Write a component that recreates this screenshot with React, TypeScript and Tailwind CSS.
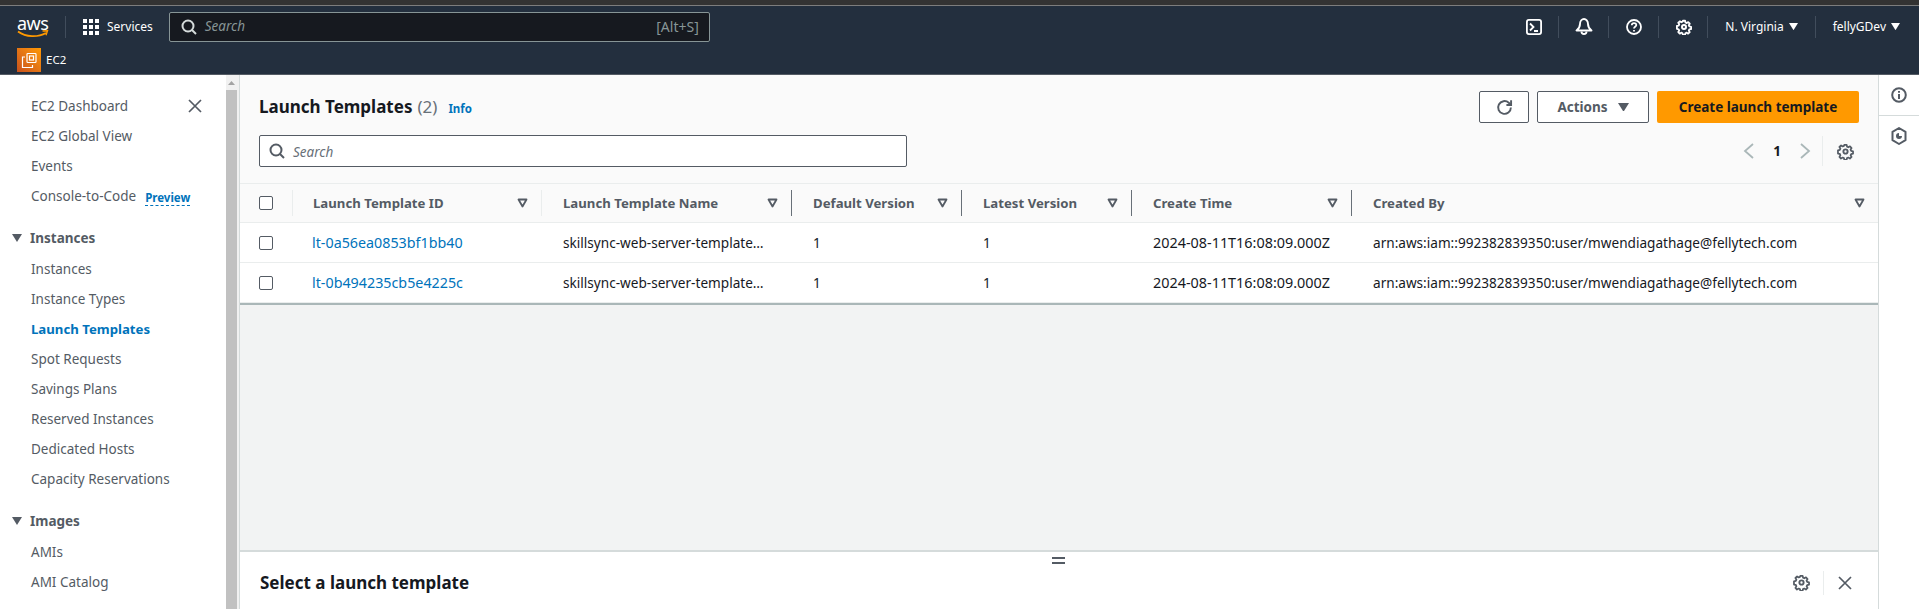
import React from "react";

const font = "font-['Noto_Sans','Open_Sans',sans-serif]";

const Gear = ({ size = 18, color = "currentColor", sw = 1.8 }: { size?: number; color?: string; sw?: number }) => (
  <svg width={size} height={size} viewBox="0 0 16 16" fill="none" stroke={color} strokeWidth={sw}>
    <circle cx="8" cy="8" r="2" />
    <path d="M6.800 1.200h2.400l.4 1.900 1.300.6 1.700-1 1.600 1.700-1 1.600.6 1.400 1.900.4v2.400l-1.900.4-.6 1.300 1 1.700-1.700 1.600-1.600-1-1.400.6-.4 1.900H6.800l-.4-1.900-1.300-.6-1.700 1-1.600-1.700 1-1.600-.6-1.400-1.900-.4V6.800l1.900-.4.6-1.300-1-1.700 1.700-1.600 1.600 1 1.400-.6z" strokeLinejoin="round" transform="translate(8 8) scale(.92) translate(-8 -8)" />
  </svg>
);

const SearchIcon = ({ color }: { color: string }) => (
  <svg width="16" height="16" viewBox="0 0 16 16" fill="none" stroke={color} strokeWidth={2}>
    <circle cx="7" cy="7" r="5.500" />
    <path d="M11 11l4 4" />
  </svg>
);

const Caret = ({ size = 10, color = "#fff" }: { size?: number; color?: string }) => (
  <svg width={size} height={size * 0.8} viewBox="0 0 10 8">
    <path d="M0 0h10L5 8z" fill={color} />
  </svg>
);

const FilterCaret = () => (
  <svg width="11" height="10" viewBox="0 0 11 10" fill="none" stroke="#545b64" strokeWidth={1.800}>
    <path d="M1.500 1.500h8L5.500 8.500z" strokeLinejoin="round" />
  </svg>
);

const Check = () => <div className="w-[14px] h-[14px] rounded-[2px] border border-[#545b64] bg-white" />;

const NavSep = () => <div className="w-px h-[22px] bg-[#414d5c]" />;

const Nav = () => (
  <div className="h-[69px] bg-[#232f3e] border-b border-[#545b64] text-white flex flex-col">
    <div className="h-[41px] flex items-center">
      <div className="w-[65px] pl-[17px] h-[30px] flex flex-col items-start justify-center mt-[1px]">
        <span className="text-[18px] leading-[14px] tracking-[-0.5px]">aws</span>
        <svg width="32" height="9" viewBox="0 0 32 9" fill="none">
          <path d="M1 1.500c8 6 20 6 28 1.500" stroke="#ff9900" strokeWidth="1.800" />
          <path d="M25.500 1l5-.3-1.500 4.500" stroke="#ff9900" strokeWidth="1.400" />
        </svg>
      </div>
      <NavSep />
      <div className="ml-[17px] grid grid-cols-3 gap-[2px] w-[16px]">
        {Array.from({ length: 9 }).map((_, i) => (
          <div key={i} className="w-[4px] h-[4px] bg-white" />
        ))}
      </div>
      <span className="ml-[8px] text-[12px]">Services</span>
      <div className="ml-[16px] w-[541px] h-[30px] rounded-[2px] border border-[#879596] bg-[#16191f] flex items-center pl-[11px] pr-[10px]">
        <SearchIcon color="#d5dbdb" />
        <span className="ml-[8px] italic text-[13.500px] text-[#879596]">Search</span>
        <span className="ml-auto text-[14px] text-[#879596]">[Alt+S]</span>
      </div>
      <div className="ml-auto flex items-center pr-[19px]">
        <svg width="16" height="16" viewBox="0 0 16 16" fill="none" stroke="#fff" strokeWidth="1.800" className="mr-[16px]">
          <rect x=".9" y=".9" width="14.200" height="14.200" rx="2" />
          <path d="M4 4.500L7.500 8 4 11.500M8 12h4" />
        </svg>
        <NavSep />
        <svg width="18" height="17" viewBox="0 0 18 17" fill="none" stroke="#fff" strokeWidth="1.900" className="ml-[16px] mr-[15px]">
          <path d="M1.500 12.500h15c-2-1.500-3.500-3.500-3.500-6.500C13 3 11 1 9 1S5 3 5 6c0 3-1.500 5-3.500 6.500z" strokeLinejoin="round" />
          <path d="M6.500 13.500a2.500 2.500 0 005 0" />
        </svg>
        <NavSep />
        <svg width="16" height="16" viewBox="0 0 16 16" fill="none" stroke="#fff" strokeWidth="1.800" className="ml-[17px] mr-[16px]">
          <circle cx="8" cy="8" r="7" />
          <path d="M5.800 6.200C5.800 3.500 10.300 3.500 10.300 6c0 1.800-2.300 1.800-2.300 3.500" />
          <path d="M8 11v1.500" />
        </svg>
        <NavSep />
        <span className="ml-[17px] mr-[15px] text-white flex">
          <Gear size={16} sw={2} />
        </span>
        <NavSep />
        <span className="ml-[17px] text-[12px]">N. Virginia</span>
        <span className="ml-[5px] mr-[17px]"><Caret size={9} /></span>
        <NavSep />
        <span className="ml-[17px] text-[12px]">fellyGDev</span>
        <span className="ml-[5px]"><Caret size={9} /></span>
      </div>
    </div>
    <div className="flex items-center pl-[17px] mt-[1px]">
      <div className="w-[24px] h-[24px] bg-gradient-to-tr from-[#c8511b] to-[#ff9900] flex items-center justify-center">
        <svg width="17" height="17" viewBox="0 0 17 17" fill="none" stroke="#fff" strokeWidth="1.200">
          <rect x="6" y="1.500" width="9" height="9" rx=".8" />
          <rect x="8.500" y="4" width="4" height="4" />
          <path d="M4 5H1.500v10.500h10V13" />
        </svg>
      </div>
      <span className="ml-[5px] text-[11.500px]">EC2</span>
    </div>
  </div>
);

const SideItem = ({ t, active }: { t: string; active?: boolean }) => (
  <div className={`h-[30px] pl-[31px] pt-[1px] flex items-center ${active ? "text-[13.200px] text-[#0073bb] font-bold" : "text-[13.500px] text-[#545b64]"}`}>{t}</div>
);

const SideHead = ({ t }: { t: string }) => (
  <div className="h-[32px] pl-[12px] flex items-center text-[13.500px] font-bold text-[#545b64] mt-[11px]">
    <Caret size={10} color="#545b64" />
    <span className="ml-[8px]">{t}</span>
  </div>
);

const Sidebar = () => (
  <div className="w-[240px] shrink-0 flex border-r border-[#d5dbdb] bg-white">
    <div className="w-[226px] pt-[16px]">
      <div className="relative">
        <SideItem t="EC2 Dashboard" />
        <svg width="14" height="14" viewBox="0 0 14 14" fill="none" stroke="#545b64" strokeWidth="1.700" className="absolute left-[188px] top-[8px]">
          <path d="M1 1l12 12M13 1L1 13" />
        </svg>
      </div>
      <SideItem t="EC2 Global View" />
      <SideItem t="Events" />
      <div className="h-[30px] pl-[31px] pt-[1px] flex items-center text-[13.500px] text-[#545b64]">
        Console-to-Code
        <span className="ml-[9px] mt-[2px] text-[11.500px] font-bold text-[#0073bb] border-b border-dashed border-[#0073bb] leading-[15px]">Preview</span>
      </div>
      <SideHead t="Instances" />
      {["Instances", "Instance Types"].map((t) => <SideItem key={t} t={t} />)}
      <SideItem t="Launch Templates" active />
      {["Spot Requests", "Savings Plans", "Reserved Instances", "Dedicated Hosts", "Capacity Reservations"].map((t) => <SideItem key={t} t={t} />)}
      <SideHead t="Images" />
      {["AMIs", "AMI Catalog"].map((t) => <SideItem key={t} t={t} />)}
    </div>
    <div className="w-[13px] flex flex-col items-center pr-[2px] bg-[#f1f1f1]">
      <div className="h-[15px] flex items-center justify-center">
        <svg width="7" height="4" viewBox="0 0 7 4"><path d="M0 4h7L3.500 0z" fill="#a3a3a3" /></svg>
      </div>
      <div className="w-[11px] flex-1 bg-[#c1c1c1]" />
    </div>
  </div>
);

const cols = "grid grid-cols-[52px_250px_250px_170px_170px_220px_1fr]";

const HeadCell = ({ t, first }: { t: string; first?: boolean }) => (
  <div className={`flex items-center h-[26px] ${first ? "pl-[20px] border-l border-[#eaeded]" : "pl-[21px]"} pr-[13px] ${t !== "Created By" ? "border-r border-[#687078]" : ""}`}>
    <span className="pt-[1px] text-[13.200px] font-bold text-[#545b64]">{t}</span>
    <span className="ml-auto flex"><FilterCaret /></span>
  </div>
);

const Row = ({ id }: { id: string }) => (
  <div className={`${cols} h-[40px] items-center text-[#16191f] border-b border-[#eaeded] bg-white last:border-b-0`}>
    <div className="pl-[19px]"><Check /></div>
    <div className="pl-[20px] pt-[1px] text-[14.300px] text-[#0073bb]">{id}</div>
    <div className="pl-[21px] pt-[1px] text-[13.600px]">skillsync-web-server-template…</div>
    <div className="pl-[21px] pt-[1px] text-[13.600px]">1</div>
    <div className="pl-[21px] pt-[1px] text-[13.600px]">1</div>
    <div className="pl-[21px] pt-[1px] text-[14.400px]">2024-08-11T16:08:09.000Z</div>
    <div className="pl-[21px] pt-[1px] text-[13.600px] whitespace-nowrap">arn:aws:iam::992382839350:user/mwendiagathage@fellytech.com</div>
  </div>
);

const Main = () => (
  <div className="flex-1 min-w-0 flex flex-col">
    <div className="h-[108px] bg-[#fafafa] pl-[19px] pr-[19px] pt-[16px] flex flex-col">
      <div className="flex items-start">
        <div className="mt-[3px] flex items-baseline">
          <span className="text-[17px] font-bold text-[#16191f]">Launch Templates</span>
          <span className="ml-[5px] text-[17px] text-[#687078]">(2)</span>
          <span className="ml-[11px] text-[11.500px] font-bold text-[#0073bb]">Info</span>
        </div>
        <div className="ml-auto flex gap-[8px]">
          <div className="w-[50px] h-[32px] rounded-[2px] border border-[#545b64] bg-white flex items-center justify-center">
            <svg width="17" height="17" viewBox="0 0 16 16" fill="none" stroke="#545b64" strokeWidth="1.800">
              <path d="M14 8a6 6 0 11-2-4.500L14 5.500" />
              <path d="M14.200 1.200v4.500H9.800" />
            </svg>
          </div>
          <div className="w-[112px] h-[32px] rounded-[2px] border border-[#545b64] bg-white flex items-center justify-center text-[13.500px] font-bold text-[#545b64]">
            Actions
            <span className="ml-[10px]"><Caret size={11} color="#545b64" /></span>
          </div>
          <div className="w-[202px] h-[32px] rounded-[2px] bg-[#ff9900] flex items-center justify-center text-[13.500px] font-bold text-[#16191f]">
            Create launch template
          </div>
        </div>
      </div>
      <div className="flex items-center mt-[12px]">
        <div className="w-[648px] h-[32px] rounded-[2px] border border-[#545b64] bg-white flex items-center pl-[9px]">
          <SearchIcon color="#545b64" />
          <span className="ml-[8px] pt-[2px] italic text-[13.500px] text-[#687078]">Search</span>
        </div>
        <div className="ml-auto flex items-center">
          <svg width="12" height="16" viewBox="0 0 12 16" fill="none" stroke="#aab7b8" strokeWidth="1.800"><path d="M10 1L2 8l8 7" /></svg>
          <span className="ml-[18px] pt-[1px] text-[13.500px] font-bold text-[#16191f]">1</span>
          <svg width="12" height="16" viewBox="0 0 12 16" fill="none" stroke="#aab7b8" strokeWidth="1.800" className="ml-[18px]"><path d="M2 1l8 7-8 7" /></svg>
          <div className="ml-[11px] w-px h-[30px] bg-[#eaeded]" />
          <span className="ml-[14px] mr-[5px] text-[#545b64] flex"><Gear size={17} /></span>
        </div>
      </div>
    </div>
    <div className={`${cols} h-[40px] items-center bg-[#fafafa] border-t border-b border-[#eaeded]`}>
      <div className="pl-[19px]"><Check /></div>
      {["Launch Template ID", "Launch Template Name", "Default Version", "Latest Version", "Create Time", "Created By"].map((t, i) => (
        <HeadCell key={t} t={t} first={i === 0} />
      ))}
    </div>
    <Row id="lt-0a56ea0853bf1bb40" />
    <Row id="lt-0b494235cb5e4225c" />
    <div className="flex-1 bg-[#f2f3f3] border-t-2 border-[#aab7b8]" />
    <div className="h-[59px] relative bg-white border-t-2 border-[#d5dbdb] flex items-center pl-[20px] pr-[26px] pt-[4px]">
      <div className="absolute left-[812px] top-[5px] w-[13px] h-[7px] border-y-2 border-[#545b64]" />
      <span className="text-[17px] font-bold text-[#16191f]">Select a launch template</span>
      <span className="ml-auto text-[#545b64] flex"><Gear size={17} /></span>
      <div className="ml-[13px] w-px h-[24px] bg-[#eaeded]" />
      <svg width="14" height="14" viewBox="0 0 14 14" fill="none" stroke="#545b64" strokeWidth="1.700" className="ml-[14px]">
        <path d="M1 1l12 12M13 1L1 13" />
      </svg>
    </div>
  </div>
);

const Rail = () => (
  <div className="w-[41px] shrink-0 bg-white border-l border-[#d5dbdb] flex flex-col">
    <div className="h-[41px] flex items-center justify-center border-b border-[#d5dbdb]">
      <svg width="16" height="16" viewBox="0 0 16 16" fill="none" stroke="#545b64" strokeWidth="2">
        <circle cx="8" cy="8" r="6.800" />
        <path d="M8 7v5M8 4v1.800" />
      </svg>
    </div>
    <div className="h-[40px] flex items-center justify-center">
      <svg width="16" height="18" viewBox="0 0 16 18" fill="none" stroke="#545b64" strokeWidth="2">
        <path d="M8 1l6.500 3.800v8.400L8 17l-6.500-3.800V4.800z" strokeLinejoin="round" />
        <path d="M8 6a3 3 0 103 3H8z" fill="#545b64" stroke="none" />
      </svg>
    </div>
  </div>
);

export default function App() {
  return (
    <div className={`${font} w-[1919px] h-[609px] overflow-hidden flex flex-col bg-white`}>
      <div className="h-[5px] bg-[#333333] border-b border-[#7d7d7d] box-content" />
      <Nav />
      <div className="flex-1 min-h-0 flex">
        <Sidebar />
        <Main />
        <Rail />
      </div>
    </div>
  );
}
